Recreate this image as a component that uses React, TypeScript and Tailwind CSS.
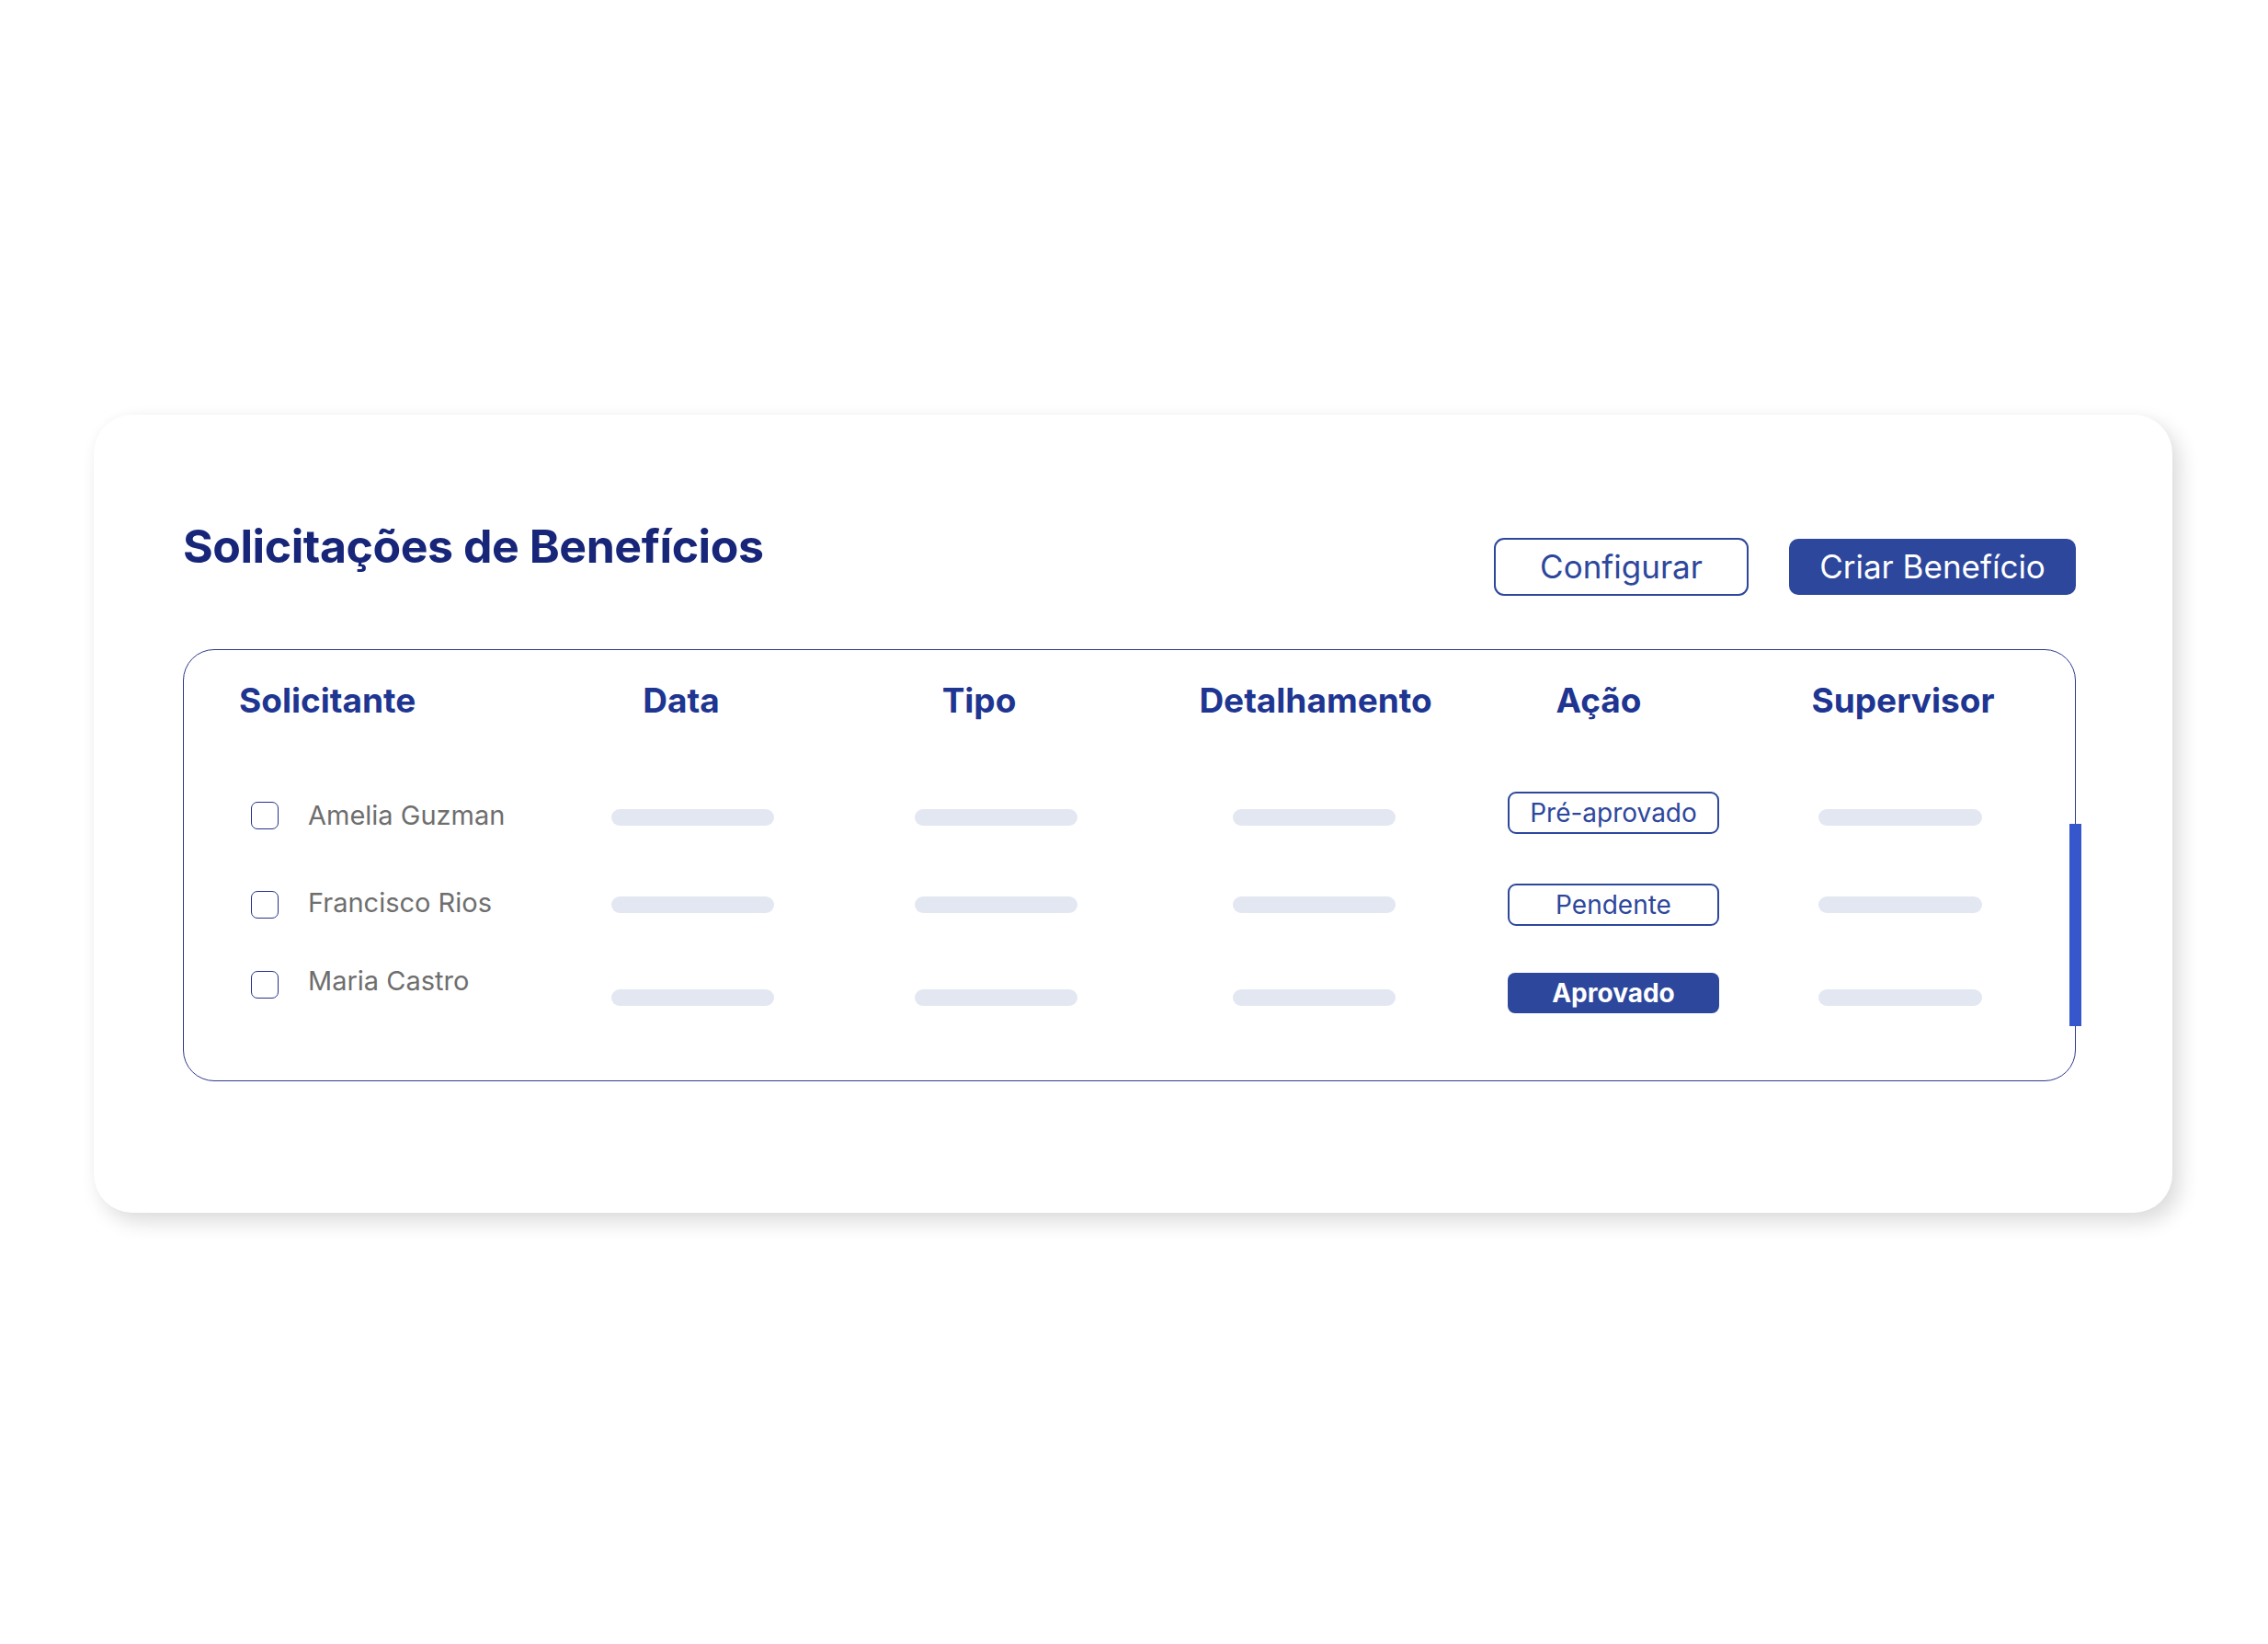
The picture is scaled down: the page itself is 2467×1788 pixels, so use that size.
import React from "react";

const font = { fontFamily: "Inter, 'Noto Sans', sans-serif" };

type RowProps = {
  name: string;
  status: "pre" | "pend" | "ok";
  h: string;
  cb: string;
  nm: string;
  bar: string;
  badge: string;
};

function Bar({ ml, mt, w }: { ml: string; mt: string; w: string }) {
  return <div className={`${ml} ${mt} ${w} h-[18px] shrink-0 rounded-full bg-[#e3e7f1]`} />;
}

function Row({ name, status, h, cb, nm, bar, badge }: RowProps) {
  return (
    <div className={`flex items-start ${h}`}>
      <div className={`ml-[13px] ${cb} h-[30px] w-[30px] shrink-0 rounded-[7px] border-[1.5px] border-[#26328c]`} />
      <div className={`ml-[32px] ${nm} w-[300px] shrink-0 text-[29px] leading-none text-[#6e6e6e]`}>{name}</div>
      <Bar ml="ml-[30px]" mt={bar} w="w-[177px]" />
      <Bar ml="ml-[153px]" mt={bar} w="w-[177px]" />
      <Bar ml="ml-[169px]" mt={bar} w="w-[177px]" />
      {status === "ok" ? (
        <div
          className={`ml-[122px] ${badge} flex h-[44px] w-[230px] shrink-0 items-center justify-center rounded-[8px] bg-[#2d479c] text-[28px] font-bold leading-none text-white`}
        >
          Aprovado
        </div>
      ) : (
        <div
          className={`ml-[122px] ${badge} flex h-[46px] w-[230px] shrink-0 items-center justify-center rounded-[9px] border-2 border-[#2d479c] text-[28px] leading-none text-[#2d479c]`}
        >
          {status === "pre" ? "Pré-aprovado" : "Pendente"}
        </div>
      )}
      <Bar ml="ml-[108px]" mt={bar} w="w-[178px]" />
    </div>
  );
}

export default function App() {
  return (
    <div className="min-h-[1788px] w-full bg-white pl-[102px] pt-[451px]" style={font}>
      <div className="h-[868px] w-[2261px] rounded-[42px] bg-white pl-[97px] pr-[105px] pt-[118px] shadow-[8px_10px_22px_rgba(0,0,0,0.14),0_-2px_10px_rgba(0,0,0,0.02)]">
        <div className="flex items-start justify-between">
          <h1 className="text-[50px] font-bold leading-none tracking-[-0.45px] text-[#172679]">
            Solicitações de Benefícios
          </h1>
          <div className="mt-[16px] flex items-start gap-[44px]">
            <button className="flex h-[63px] w-[277px] items-center justify-center rounded-[11px] border-[2.5px] border-[#2d479c] bg-white text-[35px] leading-none text-[#2d479c]">
              Configurar
            </button>
            <button className="mt-[1px] flex h-[61px] w-[312px] items-center justify-center rounded-[10px] bg-[#2d479c] text-[35px] leading-none text-white">
              Criar Benefício
            </button>
          </div>
        </div>

        <div className="relative mt-[58px] h-[470px] rounded-[34px] border-[1.5px] border-[#2f3b8f] pl-[60px] pt-[36px]">
          <div className="flex items-start text-[37px] font-bold leading-none text-[#1e3591]">
            <div className="w-[200px] shrink-0">Solicitante</div>
            <div className="ml-[131px] w-[300px] shrink-0 text-center">Data</div>
            <div className="ml-[24px] w-[300px] shrink-0 text-center">Tipo</div>
            <div className="ml-[66px] w-[300px] shrink-0 text-center">Detalhamento</div>
            <div className="ml-[8px] w-[300px] shrink-0 text-center">Ação</div>
            <div className="ml-[31px] w-[300px] shrink-0 text-center">Supervisor</div>
          </div>

          <div className="mt-[79px] flex flex-col">
            <Row name="Amelia Guzman" status="pre" h="h-[98px]" cb="mt-[13px]" nm="mt-[13px]" bar="mt-[21px]" badge="mt-[2px]" />
            <Row name="Francisco Rios" status="pend" h="h-[92px]" cb="mt-[12px]" nm="mt-[10px]" bar="mt-[18px]" badge="mt-[4px]" />
            <Row name="Maria Castro" status="ok" h="h-[60px]" cb="mt-[7px]" nm="mt-[3px]" bar="mt-[27px]" badge="mt-[9px]" />
          </div>

          <div className="absolute right-[-7px] top-[189px] h-[220px] w-[13px] bg-[#3656cc]" />
        </div>
      </div>
    </div>
  );
}
